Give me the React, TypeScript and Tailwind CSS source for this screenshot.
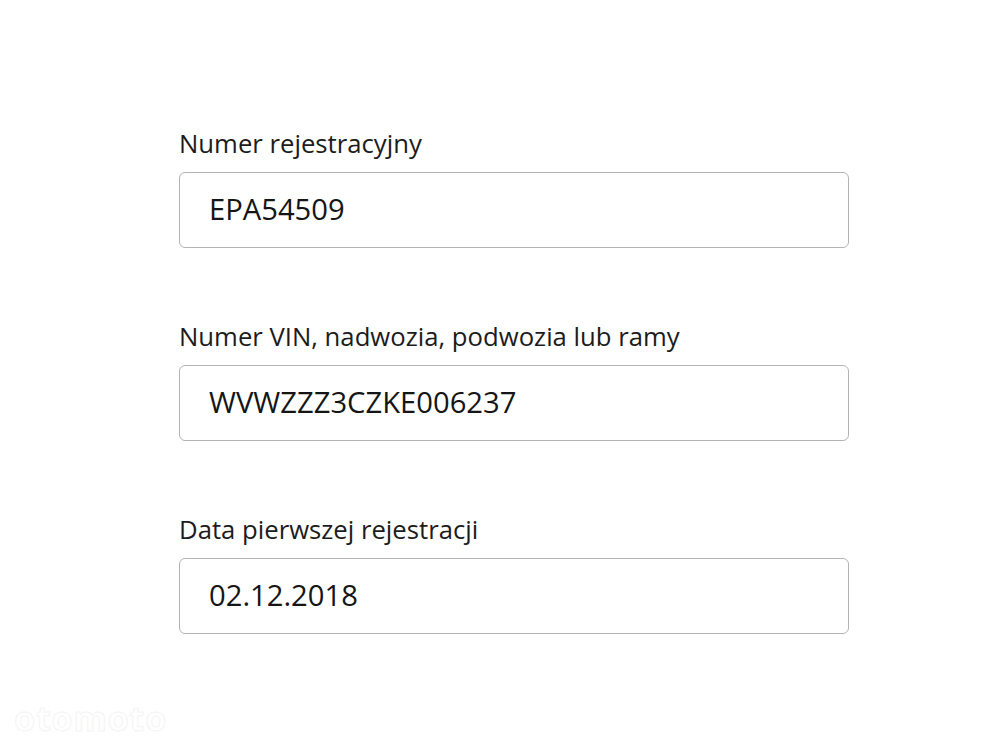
const fields = [
  { label: "Numer rejestracyjny", value: "EPA54509" },
  { label: "Numer VIN, nadwozia, podwozia lub ramy", value: "WVWZZZ3CZKE006237" },
  { label: "Data pierwszej rejestracji", value: "02.12.2018" },
];

export default function App() {
  return (
    <div className="w-[1000px] h-[750px] bg-white relative overflow-hidden" style={{ fontFamily: '"Open Sans", sans-serif' }}>
      <div className="pt-[128px] pl-[179px] w-[849px] flex flex-col gap-[73px]">
        {fields.map((f) => (
          <div key={f.label} className="flex flex-col gap-3">
            <label className="text-[25.7px] leading-[32px] text-[#1c1c1c]">{f.label}</label>
            <div className="h-[76px] border border-[#b3b3b3] rounded-[6px] flex items-center px-[29px]">
              <span className="text-[29.2px] text-[#151515]">{f.value}</span>
            </div>
          </div>
        ))}
      </div>
      <div className="absolute left-[14px] bottom-[6px] text-[34px] font-bold text-white tracking-wide" style={{ WebkitTextStroke: "1px #f4f4f4" }}>
        otomoto
      </div>
    </div>
  );
}
